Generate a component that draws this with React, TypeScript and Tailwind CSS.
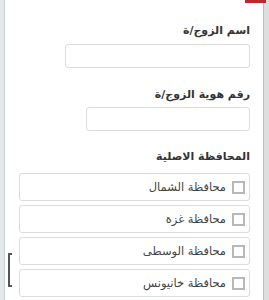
import React from 'react';

const governorates = ['محافظة الشمال', 'محافظة غزة', 'محافظة الوسطى', 'محافظة خانيونس'];

export default function App() {
  return (
    <div
      className="relative flex h-[300px] w-[269px] overflow-hidden bg-white text-[#333]"
      style={{ fontFamily: '"DejaVu Sans", "Noto Sans", sans-serif' }}
    >
      <div className="w-[5px] shrink-0 border-r border-[#c9d2d2] bg-[#e3e9e9]" />
      <div dir="rtl" className="flex-1 bg-white pr-[13px] pt-[24px]">
        <label className="block text-[11px] font-bold leading-[14px]">اسم الزوج/ة</label>
        <div className="mt-[6px] h-[24px] w-[185px] rounded-[3px] border border-[#dcdcdc] bg-white" />

        <label className="mt-[20px] block text-[11px] font-bold leading-[14px]">رقم هوية الزوج/ة</label>
        <div className="mt-[5px] h-[24px] w-[164px] rounded-[3px] border border-[#dcdcdc] bg-white" />

        <label className="mt-[19px] block text-[11px] font-bold leading-[14px]">المحافظة الاصلية</label>
        <div className="mt-[9px] flex w-[231px] flex-col gap-[4px]">
          {governorates.map((name) => (
            <div
              key={name}
              className="flex h-[28px] items-center gap-[6px] rounded-[3px] border border-[#dcdcdc] bg-white pr-[4px]"
            >
              <span className="h-[13px] w-[13px] shrink-0 border-2 border-[#b8b8b8] bg-white" />
              <span className="text-[11.5px] leading-[14px] text-[#444]">{name}</span>
            </div>
          ))}
        </div>
      </div>
      <div className="w-[6px] shrink-0 border-l border-[#bdbdbd] bg-[#dedede]" />

      <div className="absolute right-[3px] top-0 h-[3px] w-[21px] bg-[#c0272d]" />
      <div className="absolute left-[8px] top-[253px] h-[34px] w-[4px] border-y-2 border-l-2 border-[#555]" />
    </div>
  );
}
